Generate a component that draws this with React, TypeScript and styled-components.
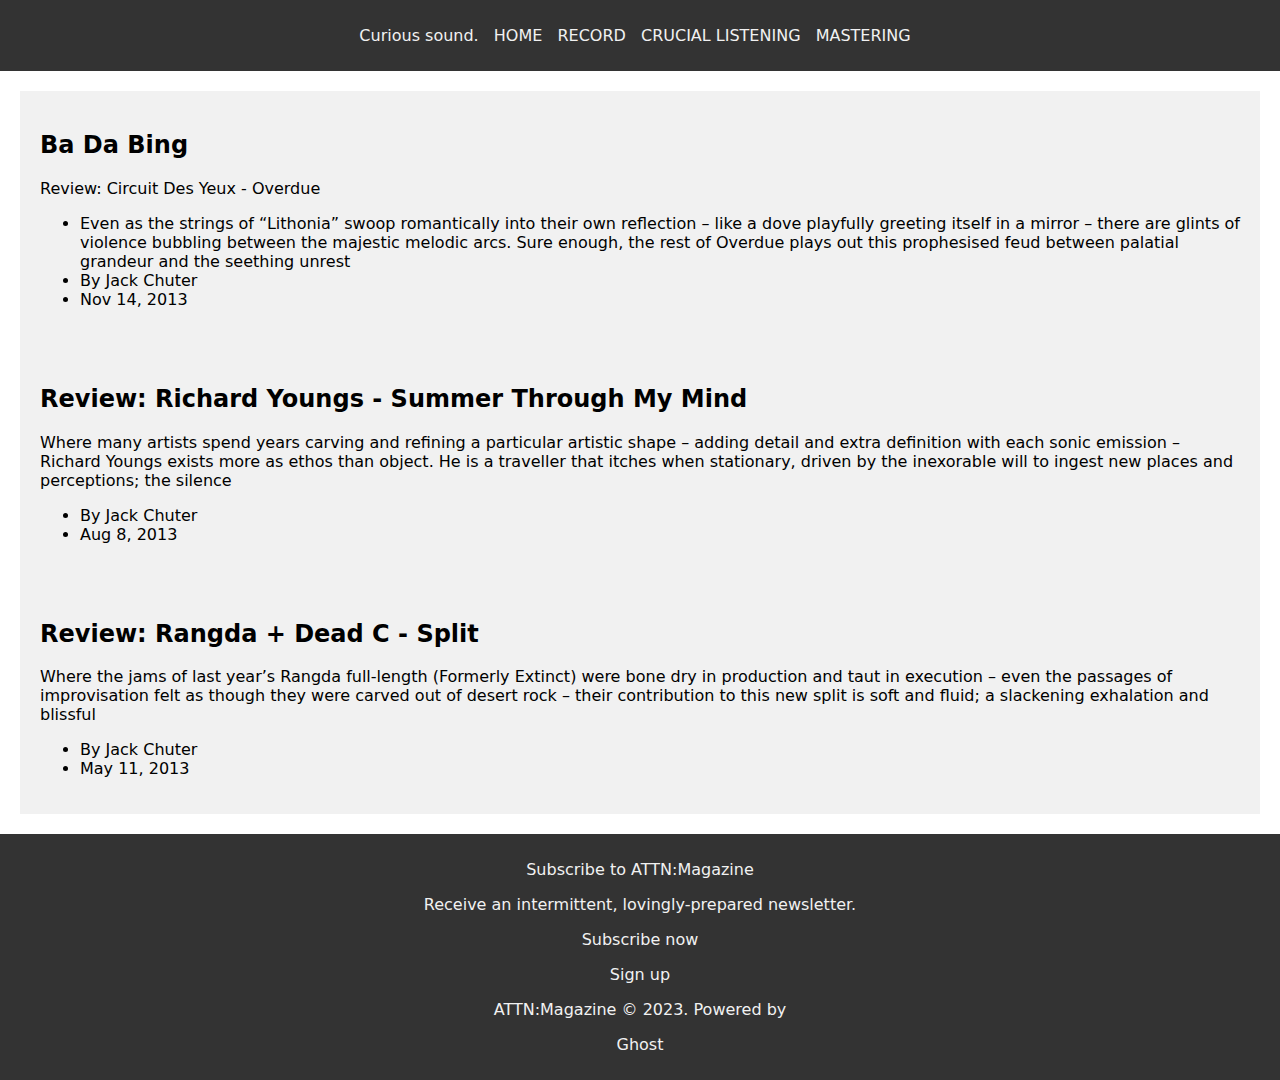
import styled, { createGlobalStyle } from 'styled-components';

type Post = {
  title: string;
  lead?: string;
  excerpt: string;
  excerptInList?: boolean;
  author: string;
  date: string;
};

const posts: Post[] = [
  {
    title: 'Ba Da Bing',
    lead: 'Review: Circuit Des Yeux - Overdue',
    excerpt:
      'Even as the strings of “Lithonia” swoop romantically into their own reflection – like a dove playfully greeting itself in a mirror – there are glints of violence bubbling between the majestic melodic arcs. Sure enough, the rest of Overdue plays out this prophesised feud between palatial grandeur and the seething unrest',
    excerptInList: true,
    author: 'By Jack Chuter',
    date: 'Nov 14, 2013',
  },
  {
    title: 'Review: Richard Youngs - Summer Through My Mind',
    excerpt:
      'Where many artists spend years carving and refining a particular artistic shape – adding detail and extra definition with each sonic emission – Richard Youngs exists more as ethos than object. He is a traveller that itches when stationary, driven by the inexorable will to ingest new places and perceptions; the silence',
    author: 'By Jack Chuter',
    date: 'Aug 8, 2013',
  },
  {
    title: 'Review: Rangda + Dead C - Split',
    excerpt:
      'Where the jams of last year’s Rangda full-length (Formerly Extinct) were bone dry in production and taut in execution – even the passages of improvisation felt as though they were carved out of desert rock – their contribution to this new split is soft and fluid; a slackening exhalation and blissful',
    author: 'By Jack Chuter',
    date: 'May 11, 2013',
  },
];

const navItems = ['HOME', 'RECORD', 'CRUCIAL LISTENING', 'MASTERING'];

const footerLines = [
  'Subscribe to ATTN:Magazine',
  'Receive an intermittent, lovingly-prepared newsletter.',
  'Subscribe now',
  'Sign up',
  'ATTN:Magazine © 2023. Powered by',
  'Ghost',
];

function App() {
  return (
    <>
      <GlobalStyle />
      <Header>
        <Nav>
          <NavLink>Curious sound.</NavLink>
          {navItems.map(item => (
            <NavLink key={item}>{item}</NavLink>
          ))}
        </Nav>
      </Header>
      <Main>
        <Feed>
          {posts.map(post => (
            <Article key={post.title}>
              <Title>{post.title}</Title>
              {post.lead && <Text>{post.lead}</Text>}
              {!post.excerptInList && <Text>{post.excerpt}</Text>}
              <Meta>
                {post.excerptInList && <li>{post.excerpt}</li>}
                <li>{post.author}</li>
                <li>{post.date}</li>
              </Meta>
            </Article>
          ))}
        </Feed>
      </Main>
      <Footer>
        {footerLines.map(line => (
          <FooterLine key={line}>{line}</FooterLine>
        ))}
      </Footer>
    </>
  );
}

export default App;

const GlobalStyle = createGlobalStyle`
  body {
    margin: 0;
    font-family: "DejaVu Sans", Verdana, sans-serif;
    font-size: 16px;
    color: #000;
    background: #fff;
  }
`;

const Header = styled.header`
  background: #333333;
  padding: 26px 0;
  height: 19px;
`;

const Nav = styled.nav`
  display: flex;
  justify-content: center;
  gap: 5.1px;
`;

const NavLink = styled.a`
  color: #f1f1f1;
  text-decoration: none;
  margin-right: 10px;
`;

const Main = styled.main`
  padding: 20px;
`;

const Feed = styled.div`
  background: #f1f1f1;
`;

const Article = styled.article`
  padding: 20px;
`;

const Title = styled.h2`
  font-size: 24px;
  margin: 0.83em 0;
`;

const Text = styled.p`
  margin: 16px 0;
`;

const Meta = styled.ul`
  margin: 16px 0;
  padding-left: 40px;
`;

const Footer = styled.footer`
  background: #333333;
  color: #f1f1f1;
  padding: 10px 0;
  text-align: center;
`;

const FooterLine = styled.p`
  margin: 16px 0;
`;
